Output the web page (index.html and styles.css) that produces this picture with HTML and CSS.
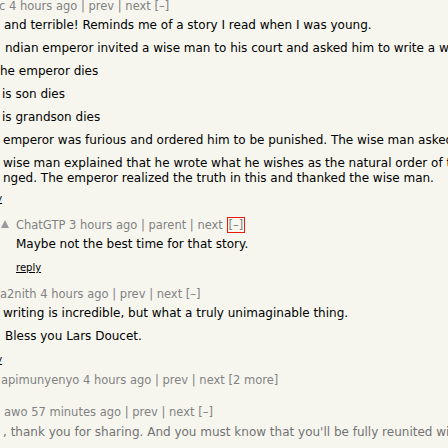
FILE: index.html
```html
<!DOCTYPE html>
<html>
<head>
<meta charset="utf-8">
<link rel="stylesheet" href="styles.css">
</head>
<body>
<div class="thread">
  <div class="comment c-top">
    <div class="meta shift-c">c 4 hours ago | prev | next [–]</div>
    <div class="text">
      <p class="x4">and terrible! Reminds me of a story I read when I was young.</p>
      <p class="x5">ndian emperor invited a wise man to his court and asked him to write a wish for his family.</p>
      <p class="x0">he emperor dies</p>
      <p class="x2">is son dies</p>
      <p class="x2">is grandson dies</p>
      <p class="x3">emperor was furious and ordered him to be punished. The wise man asked why.</p>
      <p class="x3">wise man explained that he wrote what he wishes as the natural order of things<br>nged. The emperor realized the truth in this and thanked the wise man.</p>
    </div>
    <div class="reply reply-cut"><a href="#">reply</a></div>
  </div>

  <div class="comment c-child">
    <div class="vote"><span class="arrow"></span></div>
    <div class="body">
      <div class="meta">ChatGTP 3 hours ago | parent | next <span class="toggle">[–]</span></div>
      <div class="text">
        <p>Maybe not the best time for that story.</p>
      </div>
      <div class="reply reply-low"><a href="#">reply</a></div>
    </div>
  </div>

  <div class="comment c-a2">
    <div class="meta">a2nith 4 hours ago | prev | next [–]</div>
    <div class="text">
      <p class="x3">writing is incredible, but what a truly unimaginable thing.</p>
      <p class="x5">Bless you Lars Doucet.</p>
    </div>
    <div class="reply reply-cut reply-low"><a href="#">reply</a></div>
  </div>

  <div class="comment c-collapsed">
    <div class="meta x1">apimunyenyo 4 hours ago | prev | next [2 more]</div>
  </div>

  <div class="comment c-awo">
    <div class="meta x4">awo 57 minutes ago | prev | next [–]</div>
    <div class="text faded">
      <p class="x3">, thank you for sharing. And you must know that you'll be fully reunited with them one day.</p>
    </div>
  </div>
</div>
</body>
</html>
```

FILE: styles.css
```css
html, body {
  margin: 0;
  padding: 0;
  background: #f6f6ef;
}

body {
  width: 448px;
  height: 448px;
  overflow: hidden;
  font-family: "DejaVu Sans", Verdana, sans-serif;
  color: #000;
}

.thread {
  display: flex;
  flex-direction: column;
}

.meta {
  font-size: 11.5px;
  line-height: 12px;
  color: #828282;
  white-space: nowrap;
}

.shift-c {
  margin-left: -1px;
}

.text {
  font-size: 12px;
  line-height: 15px;
  margin-top: 6px;
}

.text p {
  margin: 0 0 8px;
  white-space: nowrap;
}

.text p:last-child {
  margin-bottom: 0;
}

.faded {
  color: #737373;
  margin-top: 7px;
}

.x0 { padding-left: 0; }
.x1 { padding-left: 1px; }
.x2 { padding-left: 2px; }
.x3 { padding-left: 3px; }
.x4 { padding-left: 4px; }
.x5 { padding-left: 5px; }

.reply {
  font-size: 10px;
  line-height: 12px;
  margin-top: 7px;
  white-space: nowrap;
}

.reply-low {
  margin-top: 10px;
}

.reply a {
  color: #000;
  text-decoration: underline;
}

.reply-cut a {
  display: inline-block;
  margin-left: -23px;
}

.comment + .comment {
  margin-top: 14px;
}

.c-child {
  display: flex;
}

.vote {
  width: 16px;
  flex: none;
  padding-top: 1px;
}

.arrow {
  display: block;
  width: 0;
  height: 0;
  margin-left: 1px;
  border-left: 4px solid transparent;
  border-right: 4px solid transparent;
  border-bottom: 8px solid #9a9a9a;
}

.body {
  flex: 1;
}

.toggle {
  border: 1px solid #e8190f;
  padding: 0 1px;
}

.c-collapsed {
  margin-top: 8px !important;
}

.c-awo {
  margin-top: 20px !important;
}
```
